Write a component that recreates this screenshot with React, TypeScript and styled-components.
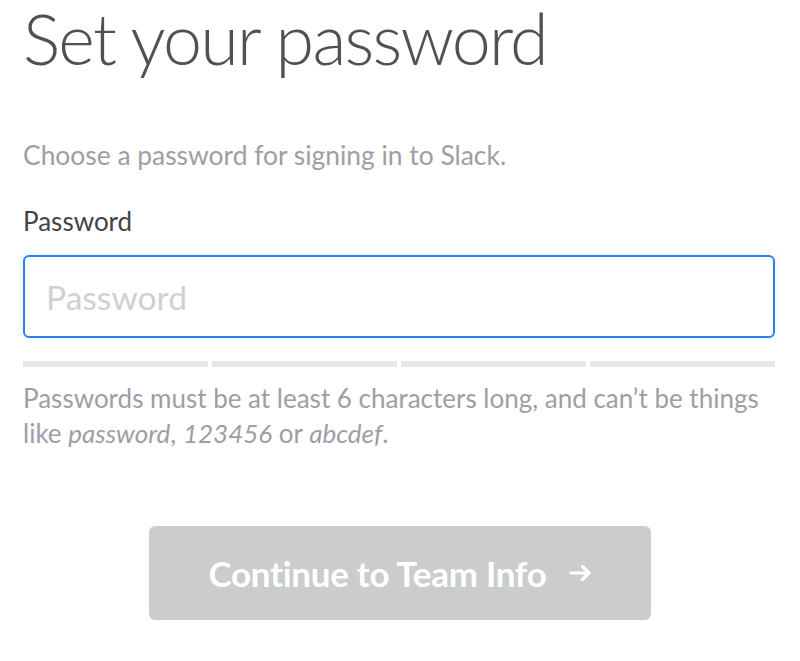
import styled, { createGlobalStyle } from 'styled-components';

const Global = createGlobalStyle`
  body {
    margin: 0;
    background: #ffffff;
    font-family: Lato, "Open Sans", sans-serif;
  }
`;

const Page = styled.div`
  padding: 0 25px 0 23px;
`;

const Title = styled.h1`
  margin: 0;
  font-weight: 300;
  font-size: 70px;
  line-height: 76px;
  color: #505055;
  letter-spacing: -1.8px;
`;

const Lead = styled.p`
  margin: 62px 0 0;
  font-size: 26.4px;
  line-height: 34px;
  color: #9e9ea6;
`;

const Label = styled.label`
  display: block;
  margin-top: 33px;
  font-size: 26px;
  line-height: 32px;
  color: #434347;
`;

const Input = styled.input`
  display: block;
  box-sizing: border-box;
  width: 100%;
  height: 83px;
  margin-top: 18px;
  padding: 0 21px;
  border: 2px solid #2a80f0;
  border-radius: 6px;
  box-shadow: 0 0 10px rgba(42, 128, 240, 0.1);
  font-family: Lato, sans-serif;
  font-size: 33.6px;
  color: #2c2d30;
  outline: none;
  &::placeholder {
    color: #d0d0d0;
  }
`;

const Meter = styled.div`
  display: grid;
  grid-template-columns: repeat(4, 1fr);
  gap: 4px;
  margin-top: 23px;
`;

const MeterBar = styled.div`
  height: 6px;
  background: #e8e8e8;
`;

const Hint = styled.p`
  margin: 14px 0 0;
  font-size: 26px;
  line-height: 35px;
  color: #9e9ea6;
  & em {
    font-style: italic;
  }
`;

const Actions = styled.div`
  display: flex;
  justify-content: center;
  margin-top: 75px;
`;

const Button = styled.button`
  display: flex;
  align-items: center;
  justify-content: center;
  gap: 23px;
  width: 502px;
  height: 94px;
  margin-left: 2px;
  border: none;
  border-radius: 6px;
  background: #cbcccc;
  color: #ffffff;
  font-family: Lato, sans-serif;
  font-weight: 700;
  font-size: 35px;
  letter-spacing: -0.3px;
`;

const Arrow = () => (
  <svg width="22" height="16" viewBox="0 0 22 16" fill="none" stroke="#fff" strokeWidth="3.2" strokeLinecap="round" strokeLinejoin="round">
    <path d="M2 8h18M13.5 1.5L20 8l-6.5 6.5" />
  </svg>
);

export default function App() {
  return (
    <Page>
      <Global />
      <Title>Set your password</Title>
      <Lead>Choose a password for signing in to Slack.</Lead>
      <Label htmlFor="pw">Password</Label>
      <Input id="pw" type="password" placeholder="Password" />
      <Meter>
        {[0, 1, 2, 3].map(i => <MeterBar key={i} />)}
      </Meter>
      <Hint>
        Passwords must be at least 6 characters long, and can’t be things like <em>password</em>, <em>123456</em> or <em>abcdef</em>.
      </Hint>
      <Actions>
        <Button disabled>
          Continue to Team Info
          <Arrow />
        </Button>
      </Actions>
    </Page>
  );
}
